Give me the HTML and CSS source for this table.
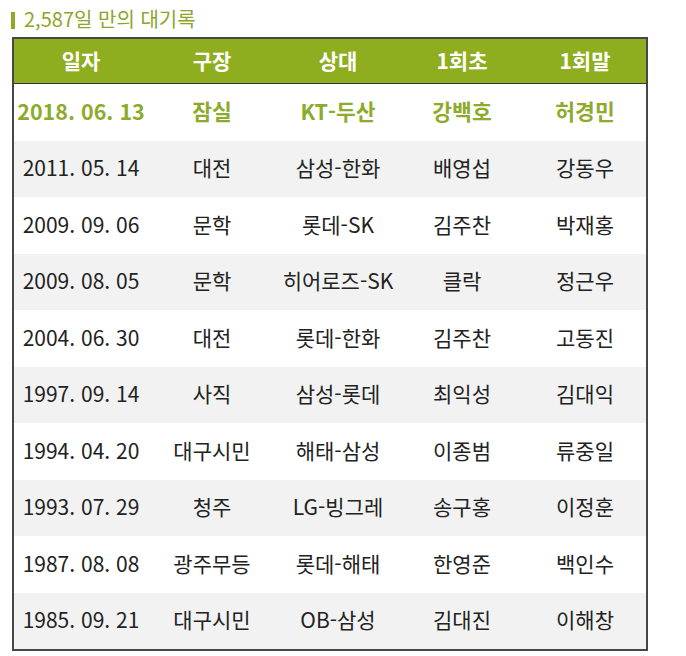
FILE: index.html
```html
<!DOCTYPE html>
<html lang="ko">
<head>
<meta charset="utf-8">
<link rel="stylesheet" href="styles.css">
</head>
<body>
<div class="title"><span class="bar"></span><span class="title-text">2,587일 만의 대기록</span></div>
<div class="table">
  <div class="row head"><div>일자</div><div>구장</div><div>상대</div><div>1회초</div><div>1회말</div></div>
  <div class="row hl"><div>2018. 06. 13</div><div>잠실</div><div>KT-두산</div><div>강백호</div><div>허경민</div></div>
  <div class="row alt"><div>2011. 05. 14</div><div>대전</div><div>삼성-한화</div><div>배영섭</div><div>강동우</div></div>
  <div class="row"><div>2009. 09. 06</div><div>문학</div><div>롯데-SK</div><div>김주찬</div><div>박재홍</div></div>
  <div class="row alt"><div>2009. 08. 05</div><div>문학</div><div>히어로즈-SK</div><div>클락</div><div>정근우</div></div>
  <div class="row"><div>2004. 06. 30</div><div>대전</div><div>롯데-한화</div><div>김주찬</div><div>고동진</div></div>
  <div class="row alt"><div>1997. 09. 14</div><div>사직</div><div>삼성-롯데</div><div>최익성</div><div>김대익</div></div>
  <div class="row"><div>1994. 04. 20</div><div>대구시민</div><div>해태-삼성</div><div>이종범</div><div>류중일</div></div>
  <div class="row alt"><div>1993. 07. 29</div><div>청주</div><div>LG-빙그레</div><div>송구홍</div><div>이정훈</div></div>
  <div class="row"><div>1987. 08. 08</div><div>광주무등</div><div>롯데-해태</div><div>한영준</div><div>백인수</div></div>
  <div class="row alt"><div>1985. 09. 21</div><div>대구시민</div><div>OB-삼성</div><div>김대진</div><div>이해창</div></div>
</div>
</body>
</html>
```
FILE: styles.css
```css
html, body {
  margin: 0;
  padding: 0;
  background: #fff;
}
body {
  font-family: "Noto Sans CJK KR", "Noto Sans", sans-serif;
  color: #222;
}
.title {
  display: flex;
  align-items: center;
  gap: 9px;
  height: 37px;
  padding-left: 11px;
  padding-top: 3px;
  box-sizing: border-box;
}
.bar {
  width: 4px;
  height: 17px;
  background: #8cab25;
}
.title-text {
  color: #8ba62b;
  font-size: 20px;
  line-height: 22px;
  padding-bottom: 2px;
}
.table {
  margin-left: 12px;
  width: 636px;
  box-sizing: border-box;
  border: 2px solid #474747;
}
.row {
  display: grid;
  grid-template-columns: 134px 128px 124px 124px 122px;
  height: 56.5px;
  align-items: center;
  font-size: 21px;
}
.row > div {
  text-align: center;
  white-space: nowrap;
  padding-bottom: 3px;
}
.row.alt {
  background: #f2f2f2;
}
.row.head {
  height: 44px;
  background: #8fae1f;
  color: #fff;
  font-weight: 700;
  border-bottom: 1px solid #333;
}
.row.hl {
  color: #8dab2a;
  font-weight: 700;
  font-size: 21.5px;
}
```
